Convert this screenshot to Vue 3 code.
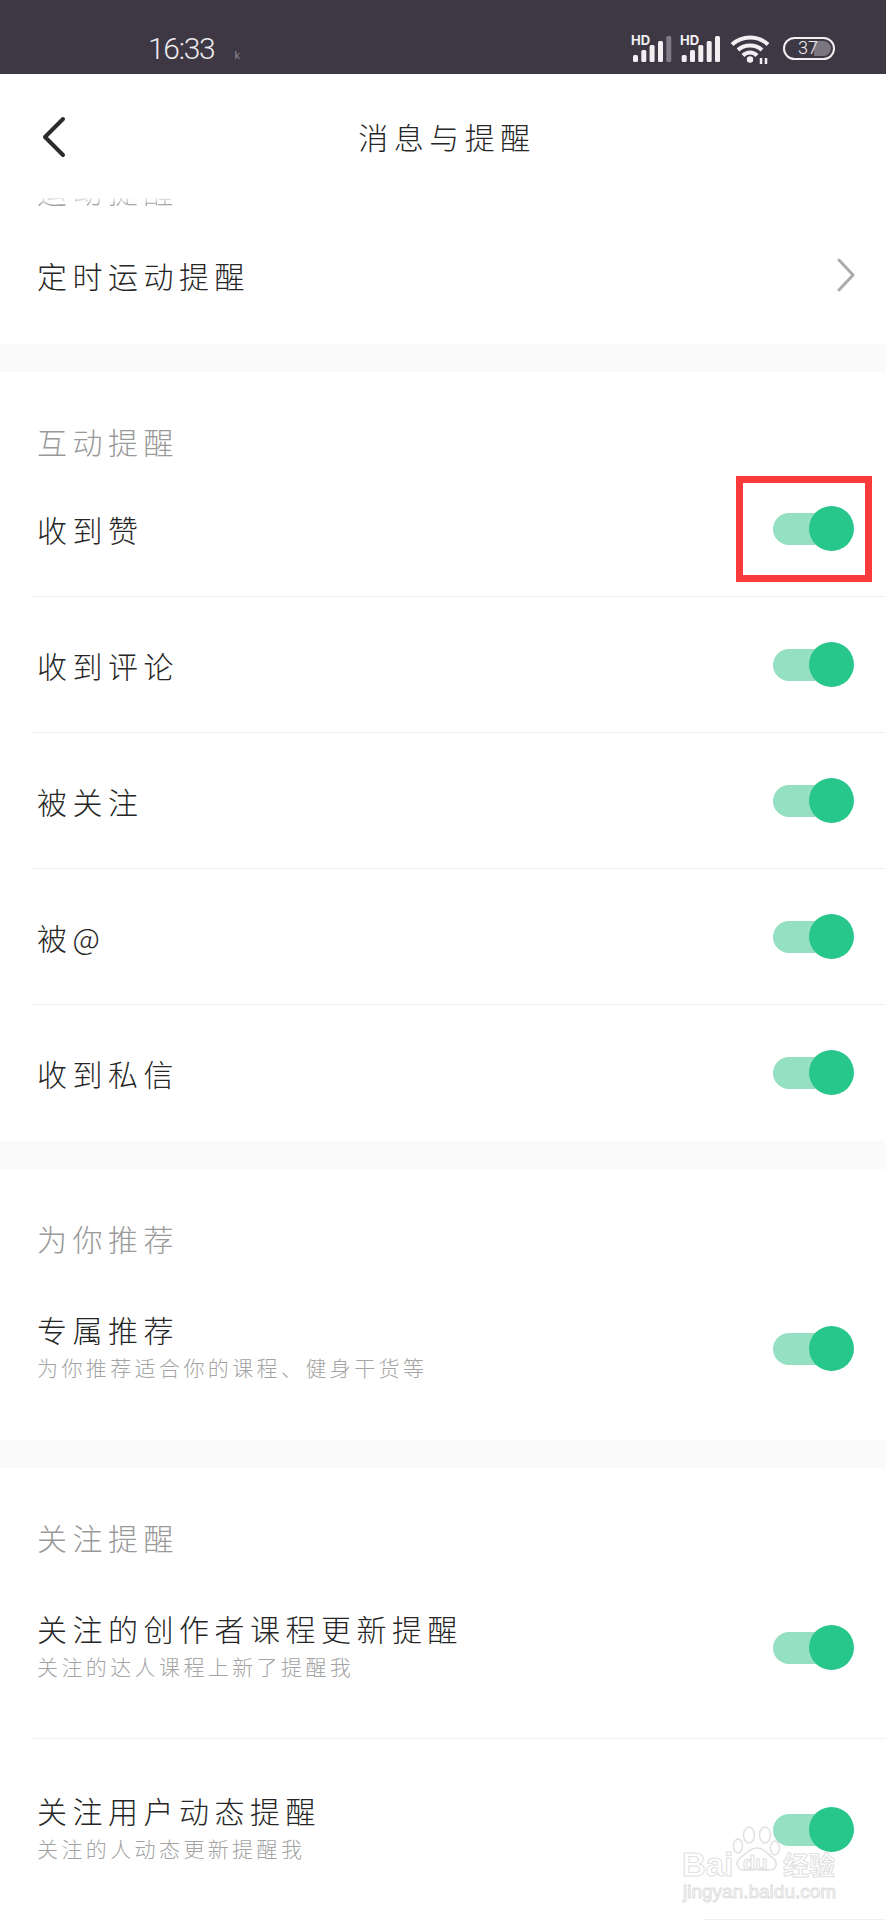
<script setup>
const sections = [
  { title: '互动提醒', rows: [
    { label: '收到赞', boxed: true },
    { label: '收到评论' },
    { label: '被关注' },
    { label: '被@' },
    { label: '收到私信', last: true }
  ] },
  { title: '为你推荐', rows: [
    { label: '专属推荐', sub: '为你推荐适合你的课程、健身干货等', last: true }
  ] },
  { title: '关注提醒', rows: [
    { label: '关注的创作者课程更新提醒', sub: '关注的达人课程上新了提醒我' },
    { label: '关注用户动态提醒', sub: '关注的人动态更新提醒我', last: true }
  ] }
]
const bars = [
  { x: 2, h: 7 },
  { x: 10.3, h: 12 },
  { x: 18.6, h: 17 },
  { x: 27, h: 21 },
  { x: 35.3, h: 26 }
]
</script>

<template>
  <div class="page">
    <div class="status">
      <div class="time">16:33</div>
      <div class="tiny">k</div>
      <div class="status-icons">
        <svg class="sig" width="42" height="36" viewBox="0 -6 42 36">
          <text x="0" y="11" class="hd">HD</text>
          <rect v-for="(b, i) in bars" :key="i" :x="b.x" :y="28 - b.h" width="5" :height="b.h" rx="1.5" :fill="i === 4 ? '#807c85' : '#f2eff3'"/>
        </svg>
        <svg class="sig2" width="42" height="36" viewBox="0 -6 42 36">
          <text x="1" y="11" class="hd">HD</text>
          <rect v-for="(b, i) in bars" :key="i" :x="b.x + 0.7" :y="28 - b.h" width="5" :height="b.h" rx="1.5" fill="#f2eff3"/>
        </svg>
        <svg class="wifi" width="40" height="30" viewBox="0 0 40 30" fill="none" stroke="#f2eff3" stroke-width="4">
          <path d="M2 10.500C12 1 28 1 38 10.500"/>
          <path d="M8 16C14.500 10 25.500 10 32 16"/>
          <path d="M13 21.500C17 17.500 23 17.500 27 21.500"/>
          <circle cx="20" cy="25.500" r="3.200" fill="#f2eff3" stroke="none"/>
          <path d="M31 24V30M36 24V30" stroke-width="2.500"/>
        </svg>
        <div class="battery">
          <div class="battery-fill"></div>
          <span class="battery-num">37</span>
        </div>
      </div>
    </div>

    <div class="nav">
      <svg class="back" width="26" height="42" viewBox="0 0 26 42" fill="none" stroke="#2b2b2b" stroke-width="4" stroke-linecap="round" stroke-linejoin="round">
        <path d="M22 3L4 21L22 39"/>
      </svg>
      <div class="nav-title">消息与提醒</div>
    </div>

    <div class="clipped"><span>运动提醒</span></div>
    <div class="timer-row">
      <span class="label">定时运动提醒</span>
      <svg width="20" height="34" viewBox="0 0 20 34" fill="none" stroke="#ababab" stroke-width="3" stroke-linecap="round" stroke-linejoin="round">
        <path d="M3 2L17 17L3 32"/>
      </svg>
    </div>

    <section v-for="s in sections" :key="s.title" class="section">
      <div class="section-title">{{ s.title }}</div>
      <div v-for="r in s.rows" :key="r.label" class="row" :class="{ tall: r.sub, last: r.last }">
        <div class="text">
          <div class="label">{{ r.label }}</div>
          <div v-if="r.sub" class="sub">{{ r.sub }}</div>
        </div>
        <div class="toggle" :class="{ boxed: r.boxed }">
          <div class="track"></div>
          <div class="knob"></div>
        </div>
      </div>
    </section>

    <div class="edge-line"></div>

    <div class="watermark">
      <svg class="paw" width="50" height="46" viewBox="0 0 50 46" fill="rgba(255,255,255,0.35)" stroke="#e0e0e0" stroke-width="1.500">
        <ellipse cx="6" cy="20" rx="4.500" ry="7"/>
        <ellipse cx="17" cy="9" rx="5.500" ry="8"/>
        <ellipse cx="33" cy="9" rx="5.500" ry="8"/>
        <ellipse cx="43" cy="22" rx="4.500" ry="7"/>
        <path d="M25 22C17 22 14 28 8 32C2 37 6 45 14 44C21 43 29 43 36 44C44 45 47 37 41 32C35 28 33 22 25 22Z"/>
      </svg>
      <span class="wm-bai">Bai</span>
      <span class="wm-du">du</span>
      <span class="wm-cn">经验</span>
      <span class="wm-url">jingyan.baidu.com</span>
    </div>
  </div>
</template>

<style>
html, body { margin: 0; background: #fff; }
</style>

<style scoped>
.page {
  position: relative;
  width: 886px;
  height: 1920px;
  overflow: hidden;
  background: #fff;
  font-family: "Noto Sans CJK SC", "Noto Sans", sans-serif;
  color: #2b2b2b;
}
.status {
  position: relative;
  height: 74px;
  background: #3d3843;
  display: flex;
  align-items: flex-end;
}
.time {
  font-family: "Roboto", sans-serif;
  font-weight: 300;
  font-size: 30px;
  line-height: 34px;
  color: #eceaee;
  margin: 0 0 8px 148px;
  letter-spacing: -1.300px;
}
.tiny {
  font-family: "Roboto", sans-serif;
  font-size: 11px;
  color: #8b8790;
  margin: 0 0 12px 20px;
}
.status-icons {
  margin-left: auto;
  margin-right: 51px;
  padding-bottom: 10px;
  display: flex;
  align-items: flex-end;
}
.sig { margin-right: 6px; }
.sig2 { margin-right: 9px; }
.wifi { margin-right: 13px; }
.hd {
  font-family: "Inter", "Liberation Sans", sans-serif;
  font-weight: 700;
  font-size: 13px;
  fill: #f2eff3;
}
.battery {
  position: relative;
  width: 52px;
  height: 23px;
  box-sizing: border-box;
  border: 2.500px solid #f2eff3;
  border-radius: 12px;
  margin-bottom: 4px;
  overflow: hidden;
}
.battery-fill {
  position: absolute;
  top: 2px;
  bottom: 2px;
  right: 2px;
  width: 17px;
  border-radius: 0 8px 8px 0;
  background: #7a7680;
}
.battery-num {
  position: absolute;
  left: 13px;
  top: -1px;
  font-family: "Roboto", sans-serif;
  font-weight: 300;
  font-size: 18px;
  line-height: 20px;
  color: #f2eff3;
}
.nav {
  position: relative;
  height: 124px;
  display: flex;
  align-items: center;
  justify-content: center;
}
.back {
  position: absolute;
  left: 41px;
  top: 42px;
}
.nav-title {
  font-size: 30px;
  font-weight: 300;
  letter-spacing: 5.500px;
  line-height: 40px;
  margin-left: 8px;
  color: #262626;
}
.clipped {
  height: 8px;
  overflow: hidden;
  display: flex;
  align-items: flex-end;
  padding-left: 37px;
  -webkit-mask-image: linear-gradient(to bottom, rgba(0,0,0,0.2), #000);
  mask-image: linear-gradient(to bottom, rgba(0,0,0,0.2), #000);
}
.clipped span {
  font-size: 30px;
  font-weight: 300;
  letter-spacing: 5.500px;
  line-height: 32px;
  color: #999;
  flex: none;
}
.timer-row {
  height: 138px;
  padding: 0 30px 0 37px;
  box-sizing: border-box;
  display: flex;
  align-items: center;
  justify-content: space-between;
}
.section {
  border-top: 28px solid #fafafa;
}
.section-title {
  height: 89px;
  padding: 49px 0 0 37px;
  box-sizing: border-box;
  font-size: 30px;
  font-weight: 300;
  letter-spacing: 5.500px;
  line-height: 40px;
  color: #999;
}
.row {
  position: relative;
  height: 136px;
  margin-left: 32px;
  padding: 0 32px 0 5px;
  box-sizing: border-box;
  border-bottom: 1px solid #f1f1f1;
  display: flex;
  align-items: center;
  justify-content: space-between;
}
.row.tall { height: 182px; }
.row.tall .text { padding-bottom: 7px; }
.row.last { border-bottom-color: transparent; }
.label {
  font-size: 30px;
  font-weight: 300;
  letter-spacing: 5.500px;
  line-height: 40px;
  color: #262626;
}
.sub {
  font-size: 21px;
  font-weight: 300;
  letter-spacing: 3.400px;
  line-height: 28px;
  margin-top: 4px;
  color: #a3a3a3;
}
.toggle {
  position: relative;
  width: 81px;
  height: 45px;
  display: flex;
  align-items: center;
  flex: none;
}
.toggle.boxed::after {
  content: "";
  position: absolute;
  left: -37px;
  top: -30px;
  width: 136px;
  height: 106px;
  box-sizing: border-box;
  border: 7px solid #fb3a3c;
}
.track {
  width: 60px;
  height: 32px;
  border-radius: 16px;
  background: #95e0c2;
}
.knob {
  position: absolute;
  right: 0;
  top: 0;
  width: 45px;
  height: 45px;
  border-radius: 50%;
  background: #27c68a;
}
.edge-line {
  position: absolute;
  left: 704px;
  right: 0;
  bottom: 0;
  height: 1px;
  background: #f1f1f1;
}
.watermark {
  position: absolute;
  left: 682px;
  top: 1826px;
  width: 156px;
  height: 76px;
  color: transparent;
  pointer-events: none;
}
.paw { position: absolute; left: 50px; top: 0; }
.wm-bai, .wm-du, .wm-cn, .wm-url {
  position: absolute;
  font-family: "Liberation Sans", sans-serif;
  -webkit-text-stroke: 1px #e0e0e0;
  white-space: nowrap;
}
.wm-bai {
  left: 0;
  top: 21px;
  font-size: 33px;
  font-weight: 700;
  line-height: 36px;
}
.wm-du {
  left: 61px;
  top: 26px;
  font-size: 20px;
  font-weight: 700;
  line-height: 22px;
}
.wm-cn {
  left: 101px;
  top: 22px;
  font-family: "Noto Sans CJK SC", sans-serif;
  font-size: 26px;
  font-weight: 700;
  line-height: 32px;
}
.wm-url {
  left: 1px;
  top: 55px;
  font-size: 19px;
  line-height: 22px;
}
</style>
